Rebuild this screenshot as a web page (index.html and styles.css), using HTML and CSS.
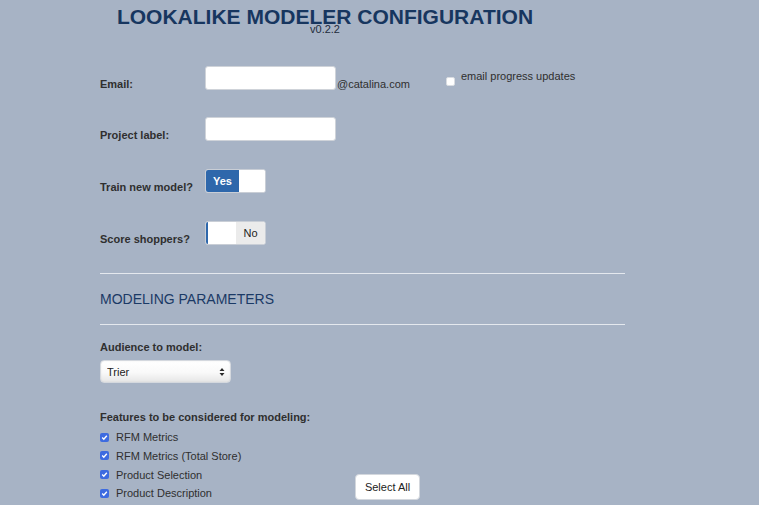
FILE: index.html
```html
<!DOCTYPE html>
<html lang="en">
<head>
<meta charset="utf-8">
<title>Lookalike Modeler Configuration</title>
<link rel="stylesheet" href="styles.css">
</head>
<body>
<header class="header">
  <h1 class="title">LOOKALIKE MODELER CONFIGURATION</h1>
  <div class="version">v0.2.2</div>
</header>
<form class="form">
  <div class="row row-first">
    <label class="lbl">Email:</label>
    <input class="txt" type="text">
    <span class="domain">@catalina.com</span>
    <label class="notify">
      <span class="box-plain"></span>
      <span class="notify-text">email progress updates</span>
    </label>
  </div>
  <div class="row">
    <label class="lbl">Project label:</label>
    <input class="txt" type="text">
  </div>
  <div class="row">
    <label class="lbl">Train new model?</label>
    <div class="toggle">
      <span class="tg-on">Yes</span>
      <span class="tg-handle"></span>
    </div>
  </div>
  <div class="row">
    <label class="lbl">Score shoppers?</label>
    <div class="toggle">
      <span class="tg-strip"></span>
      <span class="tg-handle tg-handle-off"></span>
      <span class="tg-off">No</span>
    </div>
  </div>
  <hr class="rule rule-top">
  <h2 class="section">MODELING PARAMETERS</h2>
  <hr class="rule">
  <div class="field-label">Audience to model:</div>
  <div class="select-wrap">
    <select class="select">
      <option>Trier</option>
    </select>
    <svg class="arrows" width="6" height="10" viewBox="0 0 6 10"><path d="M3 1 L5.5 4 L0.5 4 Z M3 9 L5.5 6 L0.5 6 Z" fill="#2a2a2a"/></svg>
  </div>
  <div class="field-label features-label">Features to be considered for modeling:</div>
  <div class="features">
    <ul class="checklist">
      <li class="check-item"><svg class="cb" width="9" height="9" viewBox="0 0 9 9"><rect width="9" height="9" rx="2" fill="#3d6be0"/><path d="M2.2 4.6 L3.8 6.2 L6.8 2.8" stroke="#fff" stroke-width="1.4" fill="none"/></svg><span>RFM Metrics</span></li>
      <li class="check-item"><svg class="cb" width="9" height="9" viewBox="0 0 9 9"><rect width="9" height="9" rx="2" fill="#3d6be0"/><path d="M2.2 4.6 L3.8 6.2 L6.8 2.8" stroke="#fff" stroke-width="1.4" fill="none"/></svg><span>RFM Metrics (Total Store)</span></li>
      <li class="check-item"><svg class="cb" width="9" height="9" viewBox="0 0 9 9"><rect width="9" height="9" rx="2" fill="#3d6be0"/><path d="M2.2 4.6 L3.8 6.2 L6.8 2.8" stroke="#fff" stroke-width="1.4" fill="none"/></svg><span>Product Selection</span></li>
      <li class="check-item"><svg class="cb" width="9" height="9" viewBox="0 0 9 9"><rect width="9" height="9" rx="2" fill="#3d6be0"/><path d="M2.2 4.6 L3.8 6.2 L6.8 2.8" stroke="#fff" stroke-width="1.4" fill="none"/></svg><span>Product Description</span></li>
    </ul>
    <button class="btn" type="button">Select All</button>
  </div>
</form>
</body>
</html>
```
FILE: styles.css
```css
html, body {
  margin: 0;
  padding: 0;
}
body {
  background: #a7b3c5;
  font-family: "Liberation Sans", Arial, Helvetica, sans-serif;
  color: #2f2f2f;
  overflow: hidden;
}
.header {
  width: 650px;
  text-align: center;
  padding-top: 8px;
}
.title {
  margin: 0;
  font-size: 21px;
  line-height: 18px;
  font-weight: bold;
  color: #17365f;
}
.version {
  font-size: 11px;
  line-height: 13px;
  margin-top: -3px;
  color: #1f2b3b;
}
.form {
  margin-left: 100px;
  width: 525px;
  padding-top: 30px;
}
.row {
  display: flex;
  align-items: flex-end;
  height: 24px;
  margin-bottom: 28px;
}
.row-first {
  margin-bottom: 27px;
}
.lbl {
  width: 105px;
  flex: none;
  font-size: 11px;
  line-height: 13px;
  font-weight: bold;
  color: #2f2f2f;
  margin-bottom: -1px;
}
.txt {
  box-sizing: border-box;
  width: 131px;
  height: 24px;
  margin: 0;
  padding: 2px 4px;
  border: 1px solid #cfd3d9;
  border-radius: 3px;
  background: #fff;
  font: 11px "Liberation Sans", Arial, sans-serif;
}
.domain {
  font-size: 11px;
  line-height: 13px;
  margin-bottom: -1px;
  margin-left: 1px;
  color: #2f2f2f;
}
.notify {
  align-self: flex-start;
  display: flex;
  align-items: flex-start;
  margin-left: 36px;
  font-size: 11px;
  line-height: 13px;
  color: #2f2f2f;
}
.box-plain {
  width: 7px;
  height: 7px;
  margin-top: 11px;
  margin-right: 6px;
  background: #fff;
  border: 1px solid #d9dce1;
  border-radius: 2px;
}
.notify-text {
  margin-top: 4px;
}
.toggle {
  box-sizing: border-box;
  width: 61px;
  height: 24px;
  display: flex;
  border: 1px solid #c9ced6;
  border-radius: 3px;
  overflow: hidden;
  background: #fff;
}
.tg-on {
  width: 33px;
  background: #2e67ab;
  color: #fff;
  font-size: 11px;
  font-weight: bold;
  display: flex;
  align-items: center;
  justify-content: center;
}
.tg-handle {
  flex: 1;
  background: #fff;
}
.tg-strip {
  width: 2px;
  background: #2e67ab;
}
.tg-handle-off {
  flex: none;
  width: 28px;
}
.tg-off {
  flex: 1;
  background: #ebebeb;
  color: #222;
  font-size: 11px;
  display: flex;
  align-items: center;
  justify-content: center;
}
.rule {
  border: none;
  height: 1px;
  margin: 0;
  background: #e4e8ee;
}
.rule-top {
  margin-top: 0;
}
.section {
  margin: 17px 0;
  font-size: 14px;
  line-height: 16px;
  font-weight: normal;
  color: #1b3a66;
}
.field-label {
  margin-top: 16px;
  font-size: 11px;
  line-height: 13px;
  font-weight: bold;
  color: #2f2f2f;
}
.select-wrap {
  box-sizing: border-box;
  margin-top: 6px;
  width: 131px;
  height: 23px;
  display: flex;
  align-items: center;
  border: 1px solid #d4d8de;
  border-radius: 4px;
  background: linear-gradient(#ffffff 0%, #f9f9f9 55%, #e6e6e6 100%);
  box-shadow: inset 0 0 2px rgba(0,0,0,0.08);
  padding-right: 5px;
}
.select {
  -webkit-appearance: none;
  appearance: none;
  flex: 1;
  border: none;
  background: transparent;
  font: 11px "Liberation Sans", Arial, sans-serif;
  color: #222;
  padding: 0 0 0 6px;
  height: 21px;
  outline: none;
}
.arrows {
  flex: none;
}
.features-label {
  margin-top: 28px;
}
.features {
  display: flex;
  align-items: flex-start;
  margin-top: 4px;
}
.checklist {
  list-style: none;
  margin: 0;
  padding: 0;
  width: 255px;
  flex: none;
}
.check-item {
  display: flex;
  align-items: center;
  height: 18.67px;
  font-size: 11px;
  color: #2f2f2f;
}
.cb {
  flex: none;
  margin-right: 7px;
}
.btn {
  box-sizing: border-box;
  width: 65px;
  height: 26px;
  margin-top: 46px;
  padding: 0;
  background: #fff;
  border: 1px solid #d3d7dd;
  border-radius: 4px;
  font: 11px "Liberation Sans", Arial, sans-serif;
  color: #222;
}
```
